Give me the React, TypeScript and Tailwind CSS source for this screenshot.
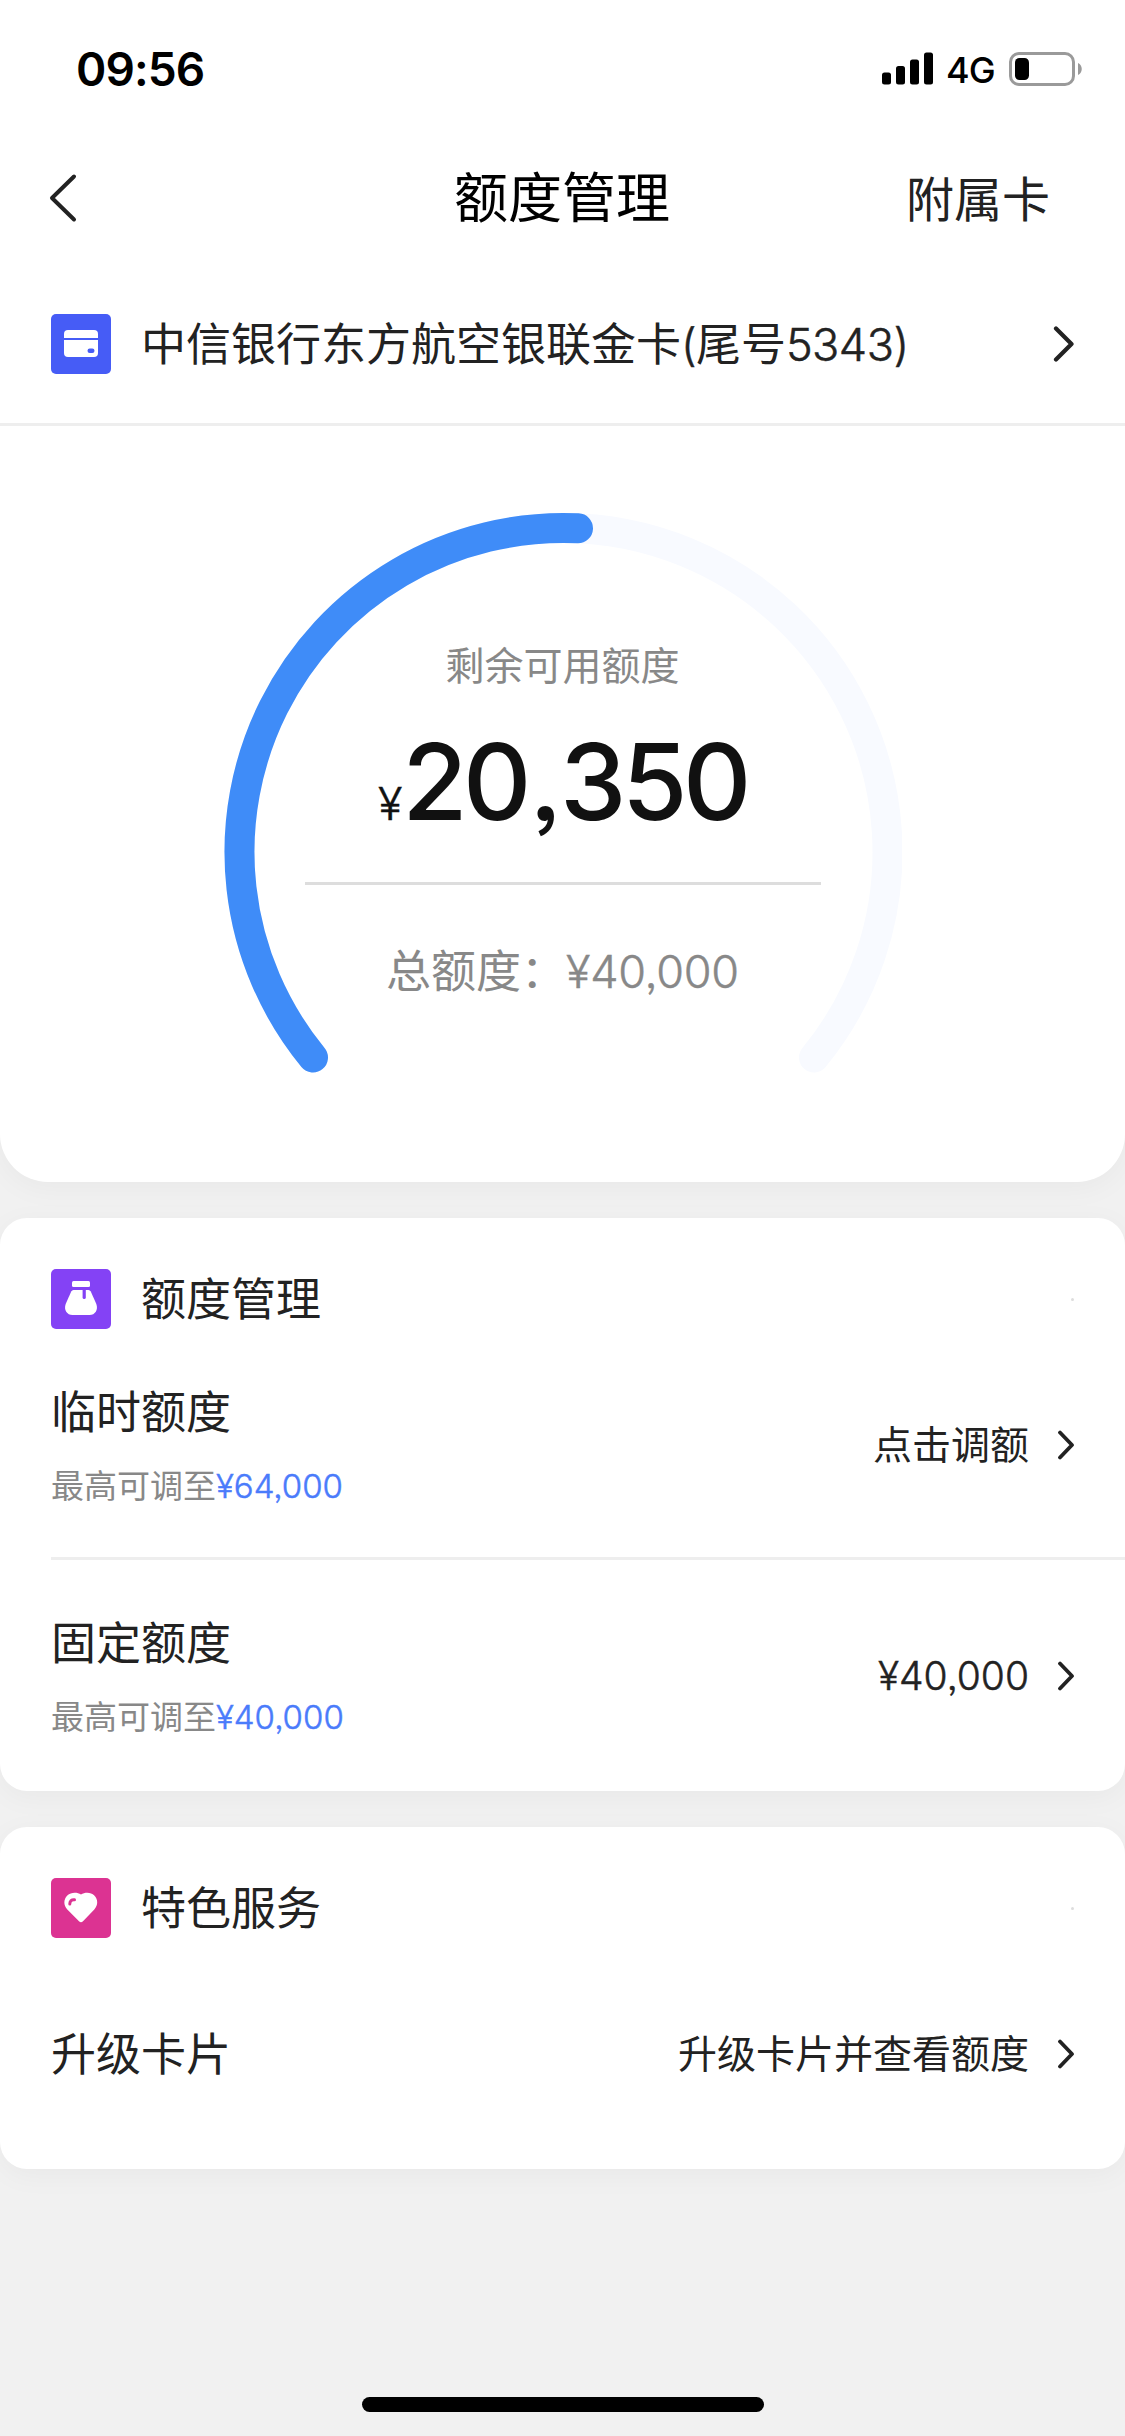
import React from "react";
import clsx from "clsx";

interface ServiceItem {
    title: string;
    hint?: string;
    hintAmount?: string;
    action: string;
    numeric?: boolean;
}

const LIMIT_ITEMS: ServiceItem[] = [
    { title: "临时额度", hint: "最高可调至", hintAmount: "¥64,000", action: "点击调额" },
    { title: "固定额度", hint: "最高可调至", hintAmount: "¥40,000", action: "¥40,000", numeric: true },
];

// Light digits with a hairline stroke, a bit heavier than 300
const DIGITS = "font-light [-webkit-text-stroke:0.5px_currentColor]";

function StatusBar() {
    return (
        <div className="flex h-[132px] items-start justify-between pl-[76px] pr-[43px]">
            <span className="mt-[41px] text-[46px] font-semibold leading-[56px] tracking-[-0.9px] text-black">09:56</span>
            <div className="mt-[48px] flex h-[42px] items-center">
                <svg width="51" height="33" viewBox="0 0 51 33" className="mb-px">
                    <rect x="0" y="20.5" width="9" height="12" rx="2.5" />
                    <rect x="14" y="14" width="9" height="18.5" rx="2.5" />
                    <rect x="28" y="7.5" width="9" height="25" rx="2.5" />
                    <rect x="42" y="0.5" width="9" height="32" rx="2.5" />
                </svg>
                <span className="ml-[13px] mt-px w-[62px] text-[36px] font-medium leading-[42px] tracking-[-1px] text-black">4G</span>
                <svg width="74" height="36" viewBox="0 0 74 36" fill="none">
                    <rect x="2.5" y="2.5" width="63" height="31" rx="8.5" stroke="#9a9a9a" strokeWidth="3" />
                    <rect x="7" y="7" width="14" height="22" rx="4.5" fill="#000" />
                    <path d="M70 12 C75 14 75 22 70 24 Z" fill="#9a9a9a" />
                </svg>
            </div>
        </div>
    );
}

function NavBar() {
    return (
        <div className="grid h-[132px] grid-cols-3 items-center pl-[48px] pr-[75px]">
            <svg width="30" height="50" viewBox="0 0 30 50" fill="none" className="-mt-px">
                <path d="M26 3.5 L4 25 L26 46.5" stroke="#222" strokeWidth="4" strokeLinecap="round" strokeLinejoin="round" />
            </svg>
            <h1 className="mt-[2px] w-[360px] text-center text-[54px] leading-[72px] text-black">额度管理</h1>
            <span className="mt-[3px] text-right text-[48px] leading-[66px]">附属卡</span>
        </div>
    );
}

function Chevron({ large }: { large?: boolean }) {
    return (
        <svg
            viewBox={large ? "0 0 22 36" : "0 0 18 30"}
            fill="none"
            className={clsx("shrink-0", large ? "h-9 w-[22px]" : "h-[30px] w-[18px]")}
        >
            <path
                d={large ? "M3 2.5 L18.5 18 L3 33.5" : "M3 2.5 L15 15 L3 27.5"}
                stroke="#222"
                strokeWidth={large ? 4.2 : 3.8}
                strokeLinecap="round"
                strokeLinejoin="round"
            />
        </svg>
    );
}

function CardIcon() {
    return (
        <svg width="60" height="60" viewBox="0 0 60 60">
            <rect width="60" height="60" rx="5" fill="#465cf6" />
            <path d="M13 24 V20 Q13 16 17 16 H43 Q47 16 47 20 V24 Z" fill="#fff" />
            <path d="M13 26 H47 V39 Q47 43 43 43 H17 Q13 43 13 39 Z" fill="#fff" />
            <rect x="36.5" y="34.5" width="7" height="4.5" rx="2.2" fill="#465cf6" />
        </svg>
    );
}

function PurseIcon() {
    return (
        <svg width="60" height="60" viewBox="0 0 60 60">
            <rect width="60" height="60" rx="5" fill="#8442f5" />
            <rect x="21" y="12" width="18" height="6" rx="1.5" fill="#fff" />
            <path
                d="M22.5 21 H37.5 Q39 21 39.8 22.6 L45.3 35 C47.5 41 44 46 38.5 46 H21.5 C16 46 12.5 41 14.7 35 L20.2 22.6 Q21 21 22.5 21 Z"
                fill="#fff"
            />
            <path d="M33.2 20.5 V28.5" stroke="#8442f5" strokeWidth="3.2" strokeLinecap="round" />
        </svg>
    );
}

function HeartIcon() {
    return (
        <svg width="60" height="60" viewBox="0 0 60 60">
            <rect width="60" height="60" rx="5" fill="#dc3392" />
            <path
                d="M30 16.5 C34 14 40 14 43.3 17.6 C47.2 21.5 47.2 27.5 43.3 31.5 L32 43.3 Q30 45.3 28 43.3 L16.3 31.5 C12.4 27.5 12.4 21.5 16.3 17.6 C20 14 26 14 30 16.5 Z"
                fill="#fff"
            />
            <path d="M18.8 26 C18.8 23 20.5 21.5 23.5 21.8" fill="none" stroke="#dc3392" strokeWidth="3" strokeLinecap="round" />
        </svg>
    );
}

function LimitGauge() {
    return (
        <div className="grid h-[756px] justify-center">
            <svg width="678" height="600" viewBox="224 503 678 600" fill="none" className="col-start-1 row-start-1 mt-[77px]">
                <path d="M313 1057.5 A324 324 0 1 1 814 1057.5" stroke="#f8faff" strokeWidth="30" strokeLinecap="round" />
                <path d="M313 1057.5 A324 324 0 0 1 578 528.3" stroke="#3f8cf8" strokeWidth="30" strokeLinecap="round" />
            </svg>
            <div className="col-start-1 row-start-1 flex flex-col items-center pt-[213px]">
                <p className="text-[39px] leading-[54px] text-[#888]">剩余可用额度</p>
                <p className="mt-[24px] flex items-baseline text-[#111]">
                    <span className={clsx("text-[45px] leading-none", DIGITS)}>¥</span>
                    <span className="text-[106px] font-[550] leading-[130px] tracking-[-4.4px]">
                        20<span className="mx-[2.5px]">,</span>350
                    </span>
                </p>
                <div className="mt-[35px] h-[3px] w-[516px] bg-[#ddd]" />
                <p className="mt-[57px] text-[45px] leading-[60px] text-[#888]">
                    总额度：<span className={clsx("tracking-[-0.2px]", DIGITS)}>¥40,000</span>
                </p>
            </div>
        </div>
    );
}

function SectionHeader({ icon, title }: { icon: React.ReactNode; title: string }) {
    return (
        <div className="flex h-[162px] items-center pl-[51px] pr-[51px]">
            {icon}
            <h2 className="ml-[30px] mt-[2px] text-[45px] leading-[60px]">{title}</h2>
            <span className="ml-auto size-[3px] rounded-full bg-[#ddd]" />
        </div>
    );
}

function ServiceRow({ item }: { item: ServiceItem }) {
    return (
        <div className="flex items-center justify-between pl-[51px] pr-[50px]">
            <div>
                <h3 className="pt-px text-[45px] leading-[63px]">{item.title}</h3>
                {item.hint && (
                    <p className="mt-[20px] text-[33px] leading-[45px] text-[#888]">
                        {item.hint}
                        <span className={clsx("text-[#4a7bfb]", DIGITS)}>{item.hintAmount}</span>
                    </p>
                )}
            </div>
            <div className="flex items-center gap-[28px]">
                <span className={clsx("text-[39px] leading-[54px]", item.numeric && DIGITS)}>
                    {item.action}
                </span>
                <Chevron />
            </div>
        </div>
    );
}

export default function App() {
    return (
        <div className="flex h-[2436px] w-[1125px] flex-col overflow-hidden bg-[#f1f1f1] font-[Inter,'Noto_Sans_CJK_SC',sans-serif] text-[#222] [font-feature-settings:'ss03']">
            <section className="h-[1182px] rounded-b-[48px] bg-white shadow-[0_6px_30px_rgba(0,0,0,0.04)]">
                <StatusBar />
                <NavBar />
                <div className="flex h-[162px] items-center border-b-3 border-[#eee] pl-[51px] pr-[50px]">
                    <CardIcon />
                    <span className="ml-[30px] mt-[2px] text-[45px] leading-[60px]">
                        中信银行东方航空银联金卡<span className={clsx("tracking-[-0.8px]", DIGITS)}>(</span>尾号
                        <span className={clsx("tracking-[-0.5px]", DIGITS)}>5343)</span>
                    </span>
                    <span className="ml-auto flex">
                        <Chevron large />
                    </span>
                </div>
                <LimitGauge />
            </section>

            <section className="mt-9 h-[573px] rounded-[27px] bg-white shadow-[0_6px_30px_rgba(0,0,0,0.04)]">
                <SectionHeader icon={<PurseIcon />} title="额度管理" />
                <ServiceRow item={LIMIT_ITEMS[0]} />
                <div className="ml-[51px] mt-[48px] mb-[51px] h-[3px] bg-[#eee]" />
                <ServiceRow item={LIMIT_ITEMS[1]} />
            </section>

            <section className="mt-9 h-[342px] rounded-[27px] bg-white shadow-[0_6px_30px_rgba(0,0,0,0.04)]">
                <SectionHeader icon={<HeartIcon />} title="特色服务" />
                <div className="pt-[33px]">
                    <ServiceRow item={{ title: "升级卡片", action: "升级卡片并查看额度" }} />
                </div>
            </section>

            <div className="mx-auto mt-auto mb-6 h-[15px] w-[402px] rounded-full bg-black" />
        </div>
    );
}
